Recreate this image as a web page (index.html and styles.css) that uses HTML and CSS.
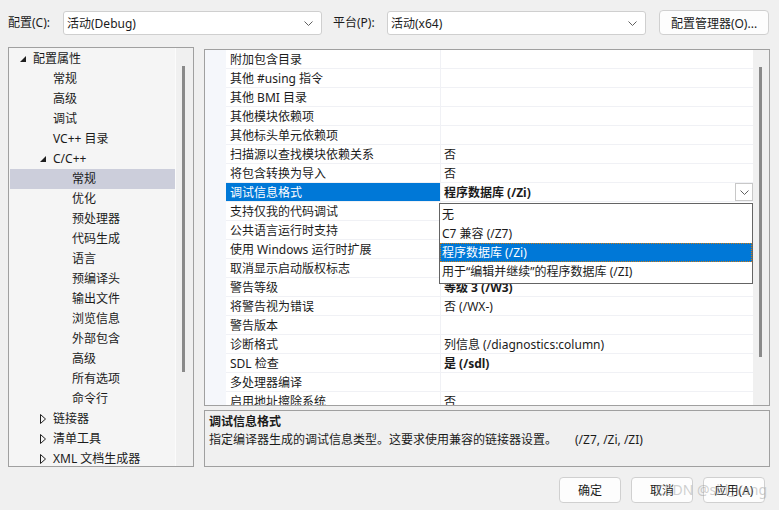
FILE: index.html
```html
<!DOCTYPE html>
<html lang="zh">
<head>
<meta charset="utf-8">
<title>属性页</title>
<link rel="stylesheet" href="styles.css">
</head>
<body>
<div class="topbar">
  <span class="lbl lbl-cfg">配置(C):</span>
  <div class="combo combo-cfg"><span>活动(Debug)</span><svg class="chev" viewBox="0 0 9 5" width="9" height="5"><polyline points="0.5,0.5 4.5,4.5 8.5,0.5" fill="none" stroke="#606060" stroke-width="1"/></svg></div>
  <span class="lbl lbl-plat">平台(P):</span>
  <div class="combo combo-plat"><span>活动(x64)</span><svg class="chev" viewBox="0 0 9 5" width="9" height="5"><polyline points="0.5,0.5 4.5,4.5 8.5,0.5" fill="none" stroke="#606060" stroke-width="1"/></svg></div>
  <button class="btn btn-mgr">配置管理器(O)...</button>
</div>

<div class="main">
  <div class="tree">
    <div class="tree-list">
      <div class="ti l0"><svg class="arr" viewBox="0 0 6 6" width="6" height="6"><polygon points="6,0 6,6 0,6" fill="#1e1e1e"/></svg><span>配置属性</span></div>
      <div class="ti l1">常规</div>
      <div class="ti l1">高级</div>
      <div class="ti l1">调试</div>
      <div class="ti l1">VC++ 目录</div>
      <div class="ti l1a"><svg class="arr" viewBox="0 0 6 6" width="6" height="6"><polygon points="6,0 6,6 0,6" fill="#1e1e1e"/></svg><span>C/C++</span></div>
      <div class="ti l2 sel">常规</div>
      <div class="ti l2">优化</div>
      <div class="ti l2">预处理器</div>
      <div class="ti l2">代码生成</div>
      <div class="ti l2">语言</div>
      <div class="ti l2">预编译头</div>
      <div class="ti l2">输出文件</div>
      <div class="ti l2">浏览信息</div>
      <div class="ti l2">外部包含</div>
      <div class="ti l2">高级</div>
      <div class="ti l2">所有选项</div>
      <div class="ti l2">命令行</div>
      <div class="ti l1a"><svg class="arr arr-c" viewBox="0 0 6 10" width="6" height="10"><polygon points="0.5,0.5 5.5,5 0.5,9.5" fill="none" stroke="#1e1e1e" stroke-width="1"/></svg><span>链接器</span></div>
      <div class="ti l1a"><svg class="arr arr-c" viewBox="0 0 6 10" width="6" height="10"><polygon points="0.5,0.5 5.5,5 0.5,9.5" fill="none" stroke="#1e1e1e" stroke-width="1"/></svg><span>清单工具</span></div>
      <div class="ti l1a"><svg class="arr arr-c" viewBox="0 0 6 10" width="6" height="10"><polygon points="0.5,0.5 5.5,5 0.5,9.5" fill="none" stroke="#1e1e1e" stroke-width="1"/></svg><span>XML 文档生成器</span></div>
    </div>
    <div class="vscroll"><div class="thumb thumb-tree"></div></div>
  </div>

  <div class="rightcol">
    <div class="grid">
      <div class="grid-list">
        <div class="row"><div class="gut"></div><div class="name">附加包含目录</div><div class="val"></div></div>
        <div class="row"><div class="gut"></div><div class="name">其他 #using 指令</div><div class="val"></div></div>
        <div class="row"><div class="gut"></div><div class="name">其他 BMI 目录</div><div class="val"></div></div>
        <div class="row"><div class="gut"></div><div class="name">其他模块依赖项</div><div class="val"></div></div>
        <div class="row"><div class="gut"></div><div class="name">其他标头单元依赖项</div><div class="val"></div></div>
        <div class="row"><div class="gut"></div><div class="name">扫描源以查找模块依赖关系</div><div class="val">否</div></div>
        <div class="row"><div class="gut"></div><div class="name">将包含转换为导入</div><div class="val">否</div></div>
        <div class="row row-sel"><div class="gut"></div><div class="name">调试信息格式</div><div class="val bold"><span>程序数据库 (/Zi)</span><div class="ddbtn"><svg viewBox="0 0 9 5" width="9" height="5"><polyline points="0.5,0.5 4.5,4.5 8.5,0.5" fill="none" stroke="#606060" stroke-width="1"/></svg></div></div></div>
        <div class="row"><div class="gut"></div><div class="name">支持仅我的代码调试</div><div class="val"></div></div>
        <div class="row"><div class="gut"></div><div class="name">公共语言运行时支持</div><div class="val"></div></div>
        <div class="row"><div class="gut"></div><div class="name">使用 Windows 运行时扩展</div><div class="val"></div></div>
        <div class="row"><div class="gut"></div><div class="name">取消显示启动版权标志</div><div class="val"></div></div>
        <div class="row"><div class="gut"></div><div class="name">警告等级</div><div class="val bold">等级 3 (/W3)</div></div>
        <div class="row"><div class="gut"></div><div class="name">将警告视为错误</div><div class="val">否 (/WX-)</div></div>
        <div class="row"><div class="gut"></div><div class="name">警告版本</div><div class="val"></div></div>
        <div class="row"><div class="gut"></div><div class="name">诊断格式</div><div class="val">列信息 (/diagnostics:column)</div></div>
        <div class="row"><div class="gut"></div><div class="name">SDL 检查</div><div class="val bold">是 (/sdl)</div></div>
        <div class="row"><div class="gut"></div><div class="name">多处理器编译</div><div class="val"></div></div>
        <div class="row"><div class="gut"></div><div class="name">启用地址擦除系统</div><div class="val">否</div></div>
      </div>
      <div class="vscroll vscroll-grid"><div class="thumb thumb-grid"></div></div>
      <div class="dropdown">
        <div class="opt">无</div>
        <div class="opt">C7 兼容 (/Z7)</div>
        <div class="opt opt-sel">程序数据库 (/Zi)</div>
        <div class="opt">用于“编辑并继续”的程序数据库 (/ZI)</div>
      </div>
    </div>
    <div class="desc">
      <div class="desc-title">调试信息格式</div>
      <div class="desc-text">指定编译器生成的调试信息类型。这要求使用兼容的链接器设置。<span class="desc-opt">(/Z7, /Zi, /ZI)</span></div>
    </div>
  </div>
</div>

<div class="buttons">
  <button class="btn btn-dlg">确定</button>
  <button class="btn btn-dlg">取消</button>
  <button class="btn btn-dlg">应用(A)</button>
  <span class="watermark">CSDN @sid_Yang</span>
</div>
</body>
</html>
```

FILE: styles.css
```css
* { box-sizing: border-box; }
html, body { margin: 0; padding: 0; }
body {
  width: 779px;
  height: 510px;
  overflow: hidden;
  background: #f0f0f0;
  font-family: "Noto Sans", "Noto Sans CJK SC", sans-serif;
  font-size: 12px;
  color: #1b1b1b;
  position: relative;
}

/* top bar */
.topbar {
  display: flex;
  align-items: center;
  padding: 11px 0 0 8px;
  height: 35px;
}
.lbl { white-space: nowrap; line-height: 24px; }
.lbl-cfg { width: 55px; }
.lbl-plat { width: 54px; margin-left: 11px; }
.combo {
  height: 24px;
  width: 259px;
  background: #ffffff;
  border: 1px solid #cfcfcf;
  border-radius: 3px;
  display: flex;
  align-items: center;
  justify-content: space-between;
  padding: 0 8px 0 3px;
  font-size: 12px;
}
.chev { display: block; }
.btn {
  font-family: "Noto Sans", "Noto Sans CJK SC", sans-serif;
  font-size: 12px;
  color: #1b1b1b;
  background: #fdfdfd;
  border: 1px solid #d0d0d0;
  border-radius: 4px;
  padding: 0;
  margin: 0;
}
.btn-mgr {
  margin-left: 13px;
  width: 110px;
  height: 25px;
  margin-top: -1px;
}

/* main */
.main {
  display: flex;
  padding-left: 8px;
  margin-top: 12px;
  height: 420px;
}
.tree {
  width: 186px;
  height: 420px;
  border: 1px solid #a0a0a0;
  display: flex;
  background: #f0f0f0;
}
.tree-list {
  width: 167px;
  background: #f5f5f5;
  padding: 1px 0 0 1px;
  overflow: hidden;
  border-right: 1px solid #fbfbfb;
}
.ti {
  height: 20px;
  line-height: 20px;
  display: flex;
  align-items: center;
  white-space: nowrap;
}
.ti .arr { flex: none; margin-right: 7px; }
.ti .arr-c { margin-right: 7px; }
.l0 { padding-left: 10px; }
.l1 { padding-left: 43px; }
.l1a { padding-left: 30px; }
.l2 { padding-left: 62px; }
.sel { background: #cccedb; }

.vscroll {
  flex: 1;
  position: relative;
  background: #f0f0f0;
}
.thumb {
  position: absolute;
  width: 3px;
  background: #8a8a8a;
}
.thumb-tree { left: 6px; top: 18px; height: 306px; }

/* right column */
.rightcol {
  margin-left: 10px;
  width: 566px;
  display: flex;
  flex-direction: column;
}
.grid {
  margin-top: 2px;
  height: 357px;
  border: 1px solid #a0a0a0;
  display: flex;
  position: relative;
  background: #ffffff;
}
.grid-list {
  width: 548px;
  overflow: hidden;
}
.row {
  display: flex;
  height: 19px;
  line-height: 19px;
  white-space: nowrap;
}
.gut {
  width: 21px;
  flex: none;
  background: #f5f7fb;
}
.name {
  width: 214px;
  flex: none;
  padding-left: 4px;
  border-bottom: 1px solid #f0f1f5;
}
.val {
  flex: 1;
  padding-left: 3px;
  border-left: 1px solid #f0f1f5;
  border-bottom: 1px solid #f0f1f5;
  display: flex;
  align-items: center;
  justify-content: space-between;
}
.bold { font-weight: bold; }
.row-sel .name {
  background: #0078d7;
  color: #ffffff;
}
.ddbtn {
  width: 18px;
  height: 18px;
  border: 1px solid #c8c8c8;
  background: #ffffff;
  display: flex;
  align-items: center;
  justify-content: center;
}
.vscroll-grid {
  flex: 1;
  background: #f0f0f0;
}
.thumb-grid { left: 6px; top: 17px; height: 290px; }

.dropdown {
  position: absolute;
  left: 234px;
  top: 153px;
  width: 314px;
  height: 81px;
  background: #ffffff;
  border: 1px solid #646464;
  padding-top: 1px;
}
.opt {
  height: 19px;
  line-height: 19px;
  padding-left: 2px;
  white-space: nowrap;
}
.opt-sel {
  background: #0078d7;
  color: #ffffff;
  outline: 1px dotted #d07a10;
  outline-offset: -1px;
}

.desc {
  margin-top: 4px;
  height: 58px;
  border: 1px solid #a0a0a0;
  background: #f0f0f0;
  padding: 2px 0 0 4px;
}
.desc-title {
  font-weight: bold;
  line-height: 18px;
}
.desc-text {
  line-height: 18px;
  white-space: nowrap;
}
.desc-opt { margin-left: 18px; }

/* dialog buttons */
.buttons {
  display: flex;
  justify-content: flex-end;
  gap: 10px;
  padding-right: 14px;
  margin-top: 10px;
  position: relative;
}
.btn-dlg {
  width: 62px;
  height: 26px;
}
.watermark {
  position: absolute;
  right: 12px;
  top: 3px;
  font-size: 14px;
  color: rgba(160, 160, 160, 0.5);
  pointer-events: none;
}
```
